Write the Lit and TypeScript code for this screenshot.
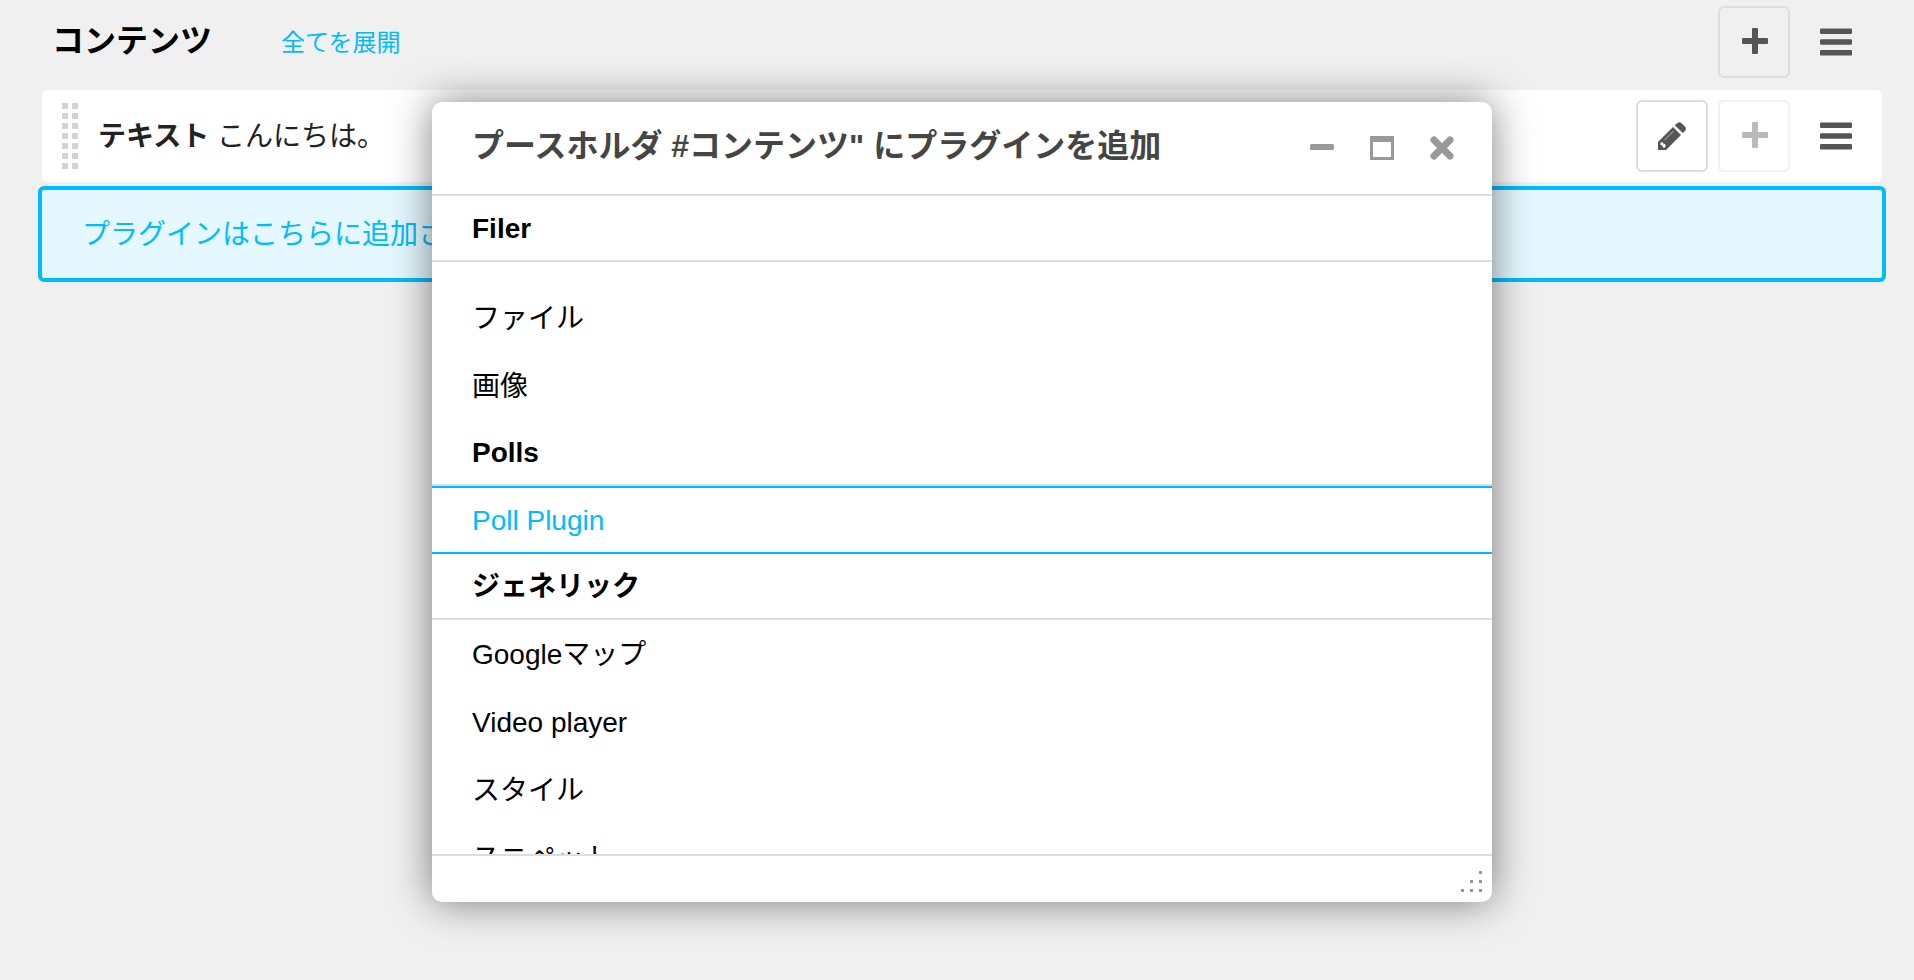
import { LitElement, html, css, svg } from "lit";
import { customElement } from "lit/decorators.js";
import { classMap } from "lit/directives/class-map.js";

interface PluginEntry {
  label: string;
  active?: boolean;
}

interface PluginGroup {
  name: string;
  pinned?: boolean;
  plugins: PluginEntry[];
}

const GROUPS: PluginGroup[] = [
  { name: "Filer", pinned: true, plugins: [{ label: "ファイル" }, { label: "画像" }] },
  { name: "Polls", plugins: [{ label: "Poll Plugin", active: true }] },
  {
    name: "ジェネリック",
    plugins: [
      { label: "Googleマップ" },
      { label: "Video player" },
      { label: "スタイル" },
      { label: "スニペット" },
    ],
  },
];

const plusIcon = html`<svg width="28" height="28" viewBox="0 0 28 28" fill="currentColor" aria-hidden="true">
  <path d="M13 0h4a1 1 0 0 1 1 1v9h9a1 1 0 0 1 1 1v4a1 1 0 0 1-1 1h-9v9a1 1 0 0 1-1 1h-4a1 1 0 0 1-1-1v-9H3a1 1 0 0 1-1-1v-4a1 1 0 0 1 1-1h9V1a1 1 0 0 1 1-1z" />
</svg>`;

const menuIcon = html`<svg width="32" height="28" viewBox="0 0 32 28" fill="currentColor" aria-hidden="true">
  <rect y="0.4" width="32" height="5.5" rx="1.2" />
  <rect y="11.2" width="32" height="5.5" rx="1.2" />
  <rect y="22" width="32" height="5.6" rx="1.2" />
</svg>`;

const pencilIcon = html`<svg width="28" height="28" viewBox="0 0 28 28" aria-hidden="true">
  <path fill="currentColor" d="M0 20 15 5l8 8L8 28H0z" />
  <path fill="currentColor" d="M16.800 3.200 19.400.9q1.900-1.500 3.900 0l3.900 3.900q1.400 1.800 0 3.900l-2.400 2.400z" />
  <path fill="#fff" d="M2.200 21.800 4 19.800l1.200 1.600 2 .8.500 2-1.500 1.800-1.400-.8-.600-1.800-1.500-.4z" />
  <path stroke="#c4c4c4" stroke-width="1" d="M6.500 18 15.500 9" />
</svg>`;

const gripIcon = html`<svg width="16" height="66" viewBox="0 0 16 66" fill="#d3d3d3" aria-hidden="true">
  ${[0, 10, 20, 30, 40, 50, 60].map(
    (y) => svg`<rect x="0" y=${y} width="6" height="6" /><rect x="10" y=${y} width="6" height="6" />`
  )}
</svg>`;

const minimizeIcon = html`<svg width="24" height="24" viewBox="0 0 24 24" fill="currentColor" aria-hidden="true">
  <rect y="8" width="24" height="6" rx="1.500" />
</svg>`;

const maximizeIcon = html`<svg width="24" height="24" viewBox="0 0 24 24" fill="currentColor" aria-hidden="true">
  <path fill-rule="evenodd" d="M0 0h24v24H0zM3 6v15h18V6z" />
</svg>`;

const closeIcon = html`<svg width="24" height="24" viewBox="0 0 24 24" aria-hidden="true">
  <path stroke="currentColor" stroke-width="7" stroke-linecap="round" d="M4 4l16 16M20 4 4 20" />
</svg>`;

const resizeIcon = html`<svg width="21" height="21" viewBox="0 0 21 21" fill="#999" aria-hidden="true">
  <path d="M18 0h3v3h-3zM9 9h3v3H9zM18 9h3v3h-3zM0 18h3v3H0zM9 18h3v3H9zM18 18h3v3h-3z" />
</svg>`;

const shared = css`
  * {
    box-sizing: border-box;
  }
  button {
    font: inherit;
    margin: 0;
    padding: 0;
    border: 0;
    background: none;
    cursor: pointer;
  }
  svg {
    display: block;
  }
`;

@customElement("plugin-picker")
export class PluginPicker extends LitElement {
  static styles = [
    shared,
    css`
      :host {
        display: flex;
        flex-direction: column;
        width: 1060px;
        max-width: 100%;
        height: 800px;
        background: #fff;
        border-radius: 10px;
        box-shadow: 0 0 40px rgba(0, 0, 0, 0.5);
        overflow: hidden;
      }
      .head {
        display: flex;
        align-items: flex-start;
        justify-content: space-between;
        padding: 20px 38px 24px 40px;
        border-bottom: 2px solid #ddd;
      }
      .title {
        margin: 0;
        font-size: 32px;
        line-height: 48px;
        font-weight: 700;
        color: #454545;
      }
      .controls {
        display: flex;
        gap: 36px;
        padding-top: 14px;
        color: #999;
      }
      .controls button {
        color: inherit;
      }
      .body {
        flex: 1;
        min-height: 0;
        overflow: hidden;
      }
      .group {
        margin: 0;
        padding: 2px 40px 0;
        border-bottom: 2px solid #ddd;
        font-size: 28px;
        line-height: 62px;
        font-weight: 700;
      }
      .list {
        margin: 0;
        padding: 0;
        list-style: none;
      }
      .list.pinned {
        padding-top: 22px;
      }
      .item {
        display: block;
        padding: 2px 40px 0;
        border: solid transparent;
        border-width: 2px 0;
        font-size: 28px;
        line-height: 62px;
        color: #000;
        text-decoration: none;
      }
      .item.active {
        border-color: #0bf;
        color: #0bf;
      }
      .foot {
        display: flex;
        align-items: flex-end;
        justify-content: flex-end;
        height: 48px;
        padding: 10px;
        border-top: 2px solid #ddd;
      }
    `,
  ];

  render() {
    return html`
      <header class="head">
        <h2 class="title">プースホルダ #コンテンツ" にプラグインを追加</h2>
        <div class="controls">
          <button type="button" aria-label="最小化">${minimizeIcon}</button>
          <button type="button" aria-label="最大化">${maximizeIcon}</button>
          <button type="button" aria-label="閉じる">${closeIcon}</button>
        </div>
      </header>
      <div class="body">
        ${GROUPS.map(
          (group) => html`
            <h3 class="group">${group.name}</h3>
            <ul class=${classMap({ list: true, pinned: !!group.pinned })}>
              ${group.plugins.map(
                (p) => html`<li><a class=${classMap({ item: true, active: !!p.active })} href="#">${p.label}</a></li>`
              )}
            </ul>
          `
        )}
      </div>
      <footer class="foot">${resizeIcon}</footer>
    `;
  }
}

@customElement("app-root")
export class AppRoot extends LitElement {
  static styles = [
    shared,
    css`
      :host {
        display: block;
        position: relative;
        min-height: 100vh;
        background: #f0f0f0;
        color: #000;
        font-family: "Liberation Sans", "Noto Sans CJK JP", sans-serif;
      }
      .board {
        padding: 0 32px 0 42px;
      }
      .bar {
        display: flex;
        align-items: center;
        padding: 6px 10px 12px;
      }
      .name {
        margin: 0;
        padding-bottom: 2px;
        font-size: 32px;
        line-height: 48px;
        font-weight: 700;
      }
      .expand {
        margin-left: 69px;
        padding-top: 2px;
        font-size: 24px;
        line-height: 36px;
        color: #0bf;
        text-decoration: none;
      }
      .tools {
        display: flex;
        gap: 10px;
        margin-left: auto;
      }
      .tool {
        display: flex;
        align-items: center;
        justify-content: center;
        width: 72px;
        height: 72px;
        color: #555;
      }
      .tool.boxed {
        border: 2px solid #ddd;
        border-radius: 6px;
      }
      .tool:disabled {
        opacity: 0.4;
        cursor: default;
      }
      .card {
        display: flex;
        align-items: center;
        padding: 10px 10px 10px 20px;
        border-radius: 6px;
        background: #fff;
      }
      .text {
        margin: 0 0 0 20px;
        padding-top: 2px;
        font-size: 28px;
        line-height: 42px;
        color: #222;
      }
      .drop {
        margin: 4px -4px 0;
        padding: 2px 40px 0;
        border: 4px solid #0bf;
        border-radius: 6px;
        background: #e5f8ff;
        font-size: 28px;
        line-height: 86px;
        color: #0bf;
      }
      .overlay {
        position: absolute;
        inset: 0;
        display: flex;
        justify-content: center;
        align-items: flex-start;
        padding: 102px 0 0 10px;
      }
    `,
  ];

  render() {
    return html`
      <main class="board">
        <header class="bar">
          <h1 class="name">コンテンツ</h1>
          <a class="expand" href="#">全てを展開</a>
          <div class="tools">
            <button type="button" class="tool boxed" aria-label="追加">${plusIcon}</button>
            <button type="button" class="tool" aria-label="メニュー">${menuIcon}</button>
          </div>
        </header>
        <section class="card">
          ${gripIcon}
          <p class="text"><strong>テキスト</strong> こんにちは。</p>
          <div class="tools">
            <button type="button" class="tool boxed" aria-label="編集">${pencilIcon}</button>
            <button type="button" class="tool boxed" aria-label="追加" disabled>${plusIcon}</button>
            <button type="button" class="tool" aria-label="メニュー">${menuIcon}</button>
          </div>
        </section>
        <div class="drop">プラグインはこちらに追加されます</div>
      </main>
      <div class="overlay">
        <plugin-picker role="dialog" aria-label="プラグインを追加"></plugin-picker>
      </div>
    `;
  }
}
